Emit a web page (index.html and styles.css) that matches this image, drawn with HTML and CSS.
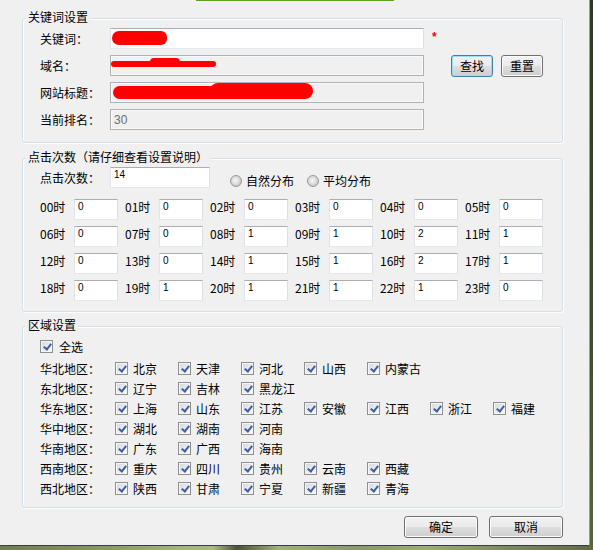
FILE: index.html
```html
<!DOCTYPE html>
<html lang="zh-CN">
<head>
<meta charset="utf-8">
<title>设置</title>
<link rel="stylesheet" href="styles.css">
</head>
<body>
<div class="win">
  <div class="topline"></div>

  <div class="group g1">
    <div class="gtitle">关键词设置</div>
    <div class="rows">
      <div class="row">
        <span class="lbl">关键词：</span>
        <span class="field"><input class="tb wide" type="text" value=""><span class="redact r1"></span></span>
        <span class="req">*</span>
      </div>
      <div class="row">
        <span class="lbl">域名：</span>
        <span class="field"><input class="tb wide dis" type="text" value="" readonly><span class="redact r2a"></span><span class="redact r2b"></span></span>
        <button class="btn sbtn focus first">查找</button>
        <button class="btn sbtn">重置</button>
      </div>
      <div class="row">
        <span class="lbl">网站标题：</span>
        <span class="field"><input class="tb wide dis" type="text" value="" readonly><span class="redact r3a"></span><span class="redact r3b"></span></span>
      </div>
      <div class="row">
        <span class="lbl">当前排名：</span>
        <span class="field"><input class="tb wide dis big" type="text" value="30" readonly></span>
      </div>
    </div>
  </div>

  <div class="group g2">
    <div class="gtitle">点击次数（请仔细查看设置说明）</div>
    <div class="row">
      <span class="lbl">点击次数：</span>
      <input class="tb num cnt" type="text" value="14">
      <span class="ritem r-first"><span class="rd"></span>自然分布</span>
      <span class="ritem"><span class="rd"></span>平均分布</span>
    </div>
    <div class="hgrid">
      <div class="hrow">
        <div class="hcell"><span class="hl">00时</span><input class="tb num h" type="text" value="0"></div>
        <div class="hcell"><span class="hl">01时</span><input class="tb num h" type="text" value="0"></div>
        <div class="hcell"><span class="hl">02时</span><input class="tb num h" type="text" value="0"></div>
        <div class="hcell"><span class="hl">03时</span><input class="tb num h" type="text" value="0"></div>
        <div class="hcell"><span class="hl">04时</span><input class="tb num h" type="text" value="0"></div>
        <div class="hcell"><span class="hl">05时</span><input class="tb num h" type="text" value="0"></div>
      </div>
      <div class="hrow">
        <div class="hcell"><span class="hl">06时</span><input class="tb num h" type="text" value="0"></div>
        <div class="hcell"><span class="hl">07时</span><input class="tb num h" type="text" value="0"></div>
        <div class="hcell"><span class="hl">08时</span><input class="tb num h" type="text" value="1"></div>
        <div class="hcell"><span class="hl">09时</span><input class="tb num h" type="text" value="1"></div>
        <div class="hcell"><span class="hl">10时</span><input class="tb num h" type="text" value="2"></div>
        <div class="hcell"><span class="hl">11时</span><input class="tb num h" type="text" value="1"></div>
      </div>
      <div class="hrow">
        <div class="hcell"><span class="hl">12时</span><input class="tb num h" type="text" value="0"></div>
        <div class="hcell"><span class="hl">13时</span><input class="tb num h" type="text" value="0"></div>
        <div class="hcell"><span class="hl">14时</span><input class="tb num h" type="text" value="1"></div>
        <div class="hcell"><span class="hl">15时</span><input class="tb num h" type="text" value="1"></div>
        <div class="hcell"><span class="hl">16时</span><input class="tb num h" type="text" value="2"></div>
        <div class="hcell"><span class="hl">17时</span><input class="tb num h" type="text" value="1"></div>
      </div>
      <div class="hrow">
        <div class="hcell"><span class="hl">18时</span><input class="tb num h" type="text" value="0"></div>
        <div class="hcell"><span class="hl">19时</span><input class="tb num h" type="text" value="1"></div>
        <div class="hcell"><span class="hl">20时</span><input class="tb num h" type="text" value="1"></div>
        <div class="hcell"><span class="hl">21时</span><input class="tb num h" type="text" value="1"></div>
        <div class="hcell"><span class="hl">22时</span><input class="tb num h" type="text" value="1"></div>
        <div class="hcell"><span class="hl">23时</span><input class="tb num h" type="text" value="0"></div>
      </div>
    </div>
  </div>

  <div class="group g3">
    <div class="gtitle">区域设置</div>
    <div class="allrow"><span class="cb"></span><span class="alltxt">全选</span></div>
    <div class="regions">
      <div class="rrow"><span class="rl">华北地区：</span>
        <span class="ck"><span class="cb"></span>北京</span><span class="ck"><span class="cb"></span>天津</span><span class="ck"><span class="cb"></span>河北</span><span class="ck"><span class="cb"></span>山西</span><span class="ck"><span class="cb"></span>内蒙古</span>
      </div>
      <div class="rrow"><span class="rl">东北地区：</span>
        <span class="ck"><span class="cb"></span>辽宁</span><span class="ck"><span class="cb"></span>吉林</span><span class="ck"><span class="cb"></span>黑龙江</span>
      </div>
      <div class="rrow"><span class="rl">华东地区：</span>
        <span class="ck"><span class="cb"></span>上海</span><span class="ck"><span class="cb"></span>山东</span><span class="ck"><span class="cb"></span>江苏</span><span class="ck"><span class="cb"></span>安徽</span><span class="ck"><span class="cb"></span>江西</span><span class="ck"><span class="cb"></span>浙江</span><span class="ck"><span class="cb"></span>福建</span>
      </div>
      <div class="rrow"><span class="rl">华中地区：</span>
        <span class="ck"><span class="cb"></span>湖北</span><span class="ck"><span class="cb"></span>湖南</span><span class="ck"><span class="cb"></span>河南</span>
      </div>
      <div class="rrow"><span class="rl">华南地区：</span>
        <span class="ck"><span class="cb"></span>广东</span><span class="ck"><span class="cb"></span>广西</span><span class="ck"><span class="cb"></span>海南</span>
      </div>
      <div class="rrow"><span class="rl">西南地区：</span>
        <span class="ck"><span class="cb"></span>重庆</span><span class="ck"><span class="cb"></span>四川</span><span class="ck"><span class="cb"></span>贵州</span><span class="ck"><span class="cb"></span>云南</span><span class="ck"><span class="cb"></span>西藏</span>
      </div>
      <div class="rrow"><span class="rl">西北地区：</span>
        <span class="ck"><span class="cb"></span>陕西</span><span class="ck"><span class="cb"></span>甘肃</span><span class="ck"><span class="cb"></span>宁夏</span><span class="ck"><span class="cb"></span>新疆</span><span class="ck"><span class="cb"></span>青海</span>
      </div>
    </div>
  </div>

  <div class="actions">
    <button class="btn lbtn">确定</button>
    <button class="btn lbtn">取消</button>
  </div>
</div>
<div class="desk"></div>
</body>
</html>
```

FILE: styles.css
```css
html, body {
  margin: 0;
  padding: 0;
}
body {
  width: 593px;
  height: 550px;
  overflow: hidden;
  background: linear-gradient(180deg, #2c3a22 0%, #3d4c2c 60%, #56663c 100%);
  font-family: "Noto Sans CJK SC", "Liberation Sans", sans-serif;
  font-size: 12px;
  color: #000;
}
.win {
  width: 590px;
  height: 546px;
  box-sizing: border-box;
  background: #f0f0f0;
  border-right: 1px solid #9d9d9d;
  border-bottom: 1px solid #3e3e3e;
  overflow: hidden;
}
.topline {
  margin-left: 196px;
  width: 198px;
  height: 1px;
  background: #5ba322;
}
.desk {
  width: 593px;
  height: 4px;
  background: linear-gradient(90deg, #6e7d4c 0%, #8a9a66 18%, #a4b47e 30%, #a9b983 36%, #4a5333 40%, #6f7d4d 43%, #a0b17c 47%, #8a9a68 60%, #9cad78 72%, #7b8a59 86%, #5f6c40 100%);
}

/* group boxes */
.group {
  position: relative;
  margin-left: 22px;
  width: 541px;
  box-sizing: border-box;
  border: 1px solid #d5dfe5;
  border-radius: 3px;
  box-shadow: inset 1px 1px 0 #fdfdfd, 1px 1px 0 #fdfdfd;
}
.gtitle {
  position: absolute;
  top: -10px;
  left: 3px;
  padding: 0 2px;
  line-height: 16px;
  background: #f0f0f0;
  white-space: nowrap;
}
.g1 {
  margin-top: 17px;
  padding: 9px 0 12px 17px;
}
.g2 {
  margin-top: 15px;
  padding: 8px 0 10px 17px;
}
.g3 {
  margin-top: 14px;
  padding: 9px 0 9px 17px;
}
.rows {
  display: flex;
  flex-direction: column;
  gap: 6px;
}
.row {
  display: flex;
  align-items: center;
  height: 21px;
}
.lbl {
  width: 70px;
  flex: none;
  white-space: nowrap;
}
.field {
  position: relative;
  display: block;
  height: 21px;
}

/* text boxes */
.tb {
  display: block;
  box-sizing: border-box;
  height: 21px;
  margin: 0;
  padding: 0 3px;
  border: 1px solid;
  border-color: #abadb3 #dbdfe6 #e3e9ef #e2e3ea;
  background: #fff;
  font-family: "Liberation Sans", "Noto Sans CJK SC", sans-serif;
  font-size: 12px;
  color: #000;
  outline: none;
}
.wide {
  width: 314px;
}
.dis {
  background: #f0f0f0;
  border-color: #adb2b5;
  box-shadow: inset 0 0 0 1px #f9f9f9;
  color: #6d6d6d;
}
.big {
  font-size: 12px;
}
.num {
  font-size: 10px;
  line-height: 12px;
  padding: 0 3px 7px 3px;
}
.cnt {
  width: 100px;
  flex: none;
}
.h {
  width: 44px;
  flex: none;
}
.req {
  margin-left: 8px;
  color: #ff0000;
  font-family: "Liberation Sans", sans-serif;
  font-weight: bold;
  font-size: 12px;
  margin-top: -3px;
}

/* redaction marks drawn over the fields */
.redact {
  position: absolute;
  background: #ff0000;
}
.r1 {
  left: 2px;
  top: 3px;
  width: 55px;
  height: 14px;
  border-radius: 8px 7px 7px 8px;
}
.r2a {
  left: 1px;
  top: 6px;
  width: 105px;
  height: 6px;
  border-radius: 3px;
}
.r2b {
  left: 40px;
  top: 3px;
  width: 30px;
  height: 8px;
  border-radius: 4px;
}
.r3a {
  left: 3px;
  top: 4px;
  width: 195px;
  height: 13px;
  border-radius: 7px;
}
.r3b {
  left: 100px;
  top: 1px;
  width: 103px;
  height: 16px;
  border-radius: 8px;
}

/* buttons */
.btn {
  box-sizing: border-box;
  height: 22px;
  margin: 0;
  padding: 0;
  border: 1px solid #707070;
  border-radius: 3px;
  background: linear-gradient(180deg, #f2f2f2 0%, #ebebeb 48%, #dddddd 52%, #cfcfcf 100%);
  box-shadow: inset 0 0 0 1px #fbfbfb;
  font-family: "Noto Sans CJK SC", sans-serif;
  font-size: 12px;
  line-height: 20px;
  color: #000;
}
.sbtn {
  width: 42px;
  flex: none;
  margin-left: 8px;
}
.sbtn.first {
  margin-left: 27px;
}
.focus {
  border-color: #3c7fb1;
  box-shadow: inset 0 0 0 1px #9fdcf9;
}
.lbtn {
  width: 74px;
}
.actions {
  margin: 8px 0 0 22px;
  width: 541px;
  display: flex;
  justify-content: flex-end;
  gap: 11px;
}

/* radios */
.ritem {
  display: flex;
  align-items: center;
  margin-left: 13px;
  margin-top: 6px;
  white-space: nowrap;
}
.ritem.r-first {
  margin-left: 20px;
}
.rd {
  width: 12px;
  height: 12px;
  box-sizing: border-box;
  margin-right: 4px;
  border-radius: 50%;
  border: 1px solid #9a9a9a;
  background: radial-gradient(circle at 45% 45%, #f6f6f6 0%, #dedede 45%, #c4c4c4 75%, #e8e8e8 100%);
}

/* hours grid */
.hgrid {
  margin-top: 11px;
  display: flex;
  flex-direction: column;
  gap: 6px;
}
.hrow {
  display: flex;
  height: 21px;
}
.hcell {
  width: 85px;
  flex: none;
  display: flex;
  align-items: flex-start;
}
.hl {
  width: 34px;
  flex: none;
  line-height: 16px;
  white-space: nowrap;
}

/* checkboxes */
.cb {
  position: relative;
  width: 13px;
  height: 13px;
  flex: none;
  box-sizing: border-box;
  border: 1px solid #8e8f8f;
  background: linear-gradient(135deg, #d3d6db 0%, #eceef0 60%, #fafafa 100%);
  box-shadow: inset 0 0 0 1px #f6f6f6;
}
.cb::after {
  content: "";
  position: absolute;
  left: 4px;
  top: 1px;
  width: 3px;
  height: 6px;
  border: solid #3f5ea8;
  border-width: 0 2px 2px 0;
  transform: rotate(38deg);
}
.allrow {
  display: flex;
  align-items: center;
  height: 20px;
}
.alltxt {
  margin-left: 6px;
}
.regions {
  margin-top: 2px;
}
.rrow {
  display: flex;
  align-items: center;
  height: 20px;
}
.rl {
  width: 75px;
  flex: none;
  white-space: nowrap;
}
.ck {
  width: 63px;
  flex: none;
  display: flex;
  align-items: center;
  white-space: nowrap;
}
.ck .cb {
  margin-right: 5px;
}
```
